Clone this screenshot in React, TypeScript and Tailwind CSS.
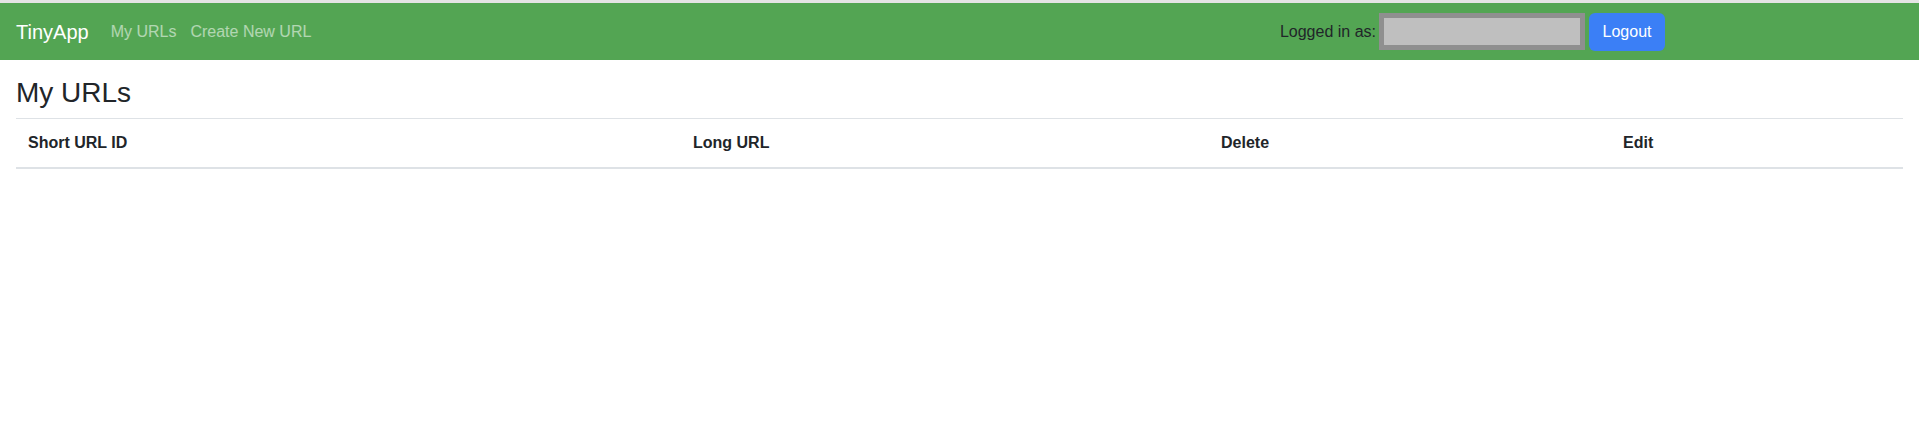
export default function App() {
  return (
    <div className="min-h-screen bg-white font-['Liberation_Sans',Arial,sans-serif] text-base text-[#212529]">
      <div className="h-[3px] bg-[#e4e4e4]" />
      <nav className="flex h-[57px] items-center bg-[#53a553] pl-4 pr-[254px]">
        <span className="text-xl text-white">TinyApp</span>
        <a href="#" className="ml-[22px] text-white/55">My URLs</a>
        <a href="#" className="ml-[14px] text-white/55">Create New URL</a>
        <div className="ml-auto flex items-center">
          <span>Logged in as:</span>
          <div className="ml-[3px] h-[37px] w-[206px] border-[5px] border-[#8f8f8f] bg-[#bfbfbf]" />
          <button className="ml-1 h-[38px] w-[76px] rounded-md bg-[#3b7ff6] text-white">Logout</button>
        </div>
      </nav>

      <main className="px-4">
        <h3 className="mt-4 mb-2 text-[28px] leading-[1.2] font-medium">My URLs</h3>
        <div className="grid grid-cols-[665px_528px_402px_1fr] border-t border-b-2 border-[#dee2e6] font-bold leading-6">
          <div className="p-3">Short URL ID</div>
          <div className="p-3">Long URL</div>
          <div className="p-3">Delete</div>
          <div className="p-3">Edit</div>
        </div>
      </main>
    </div>
  )
}
